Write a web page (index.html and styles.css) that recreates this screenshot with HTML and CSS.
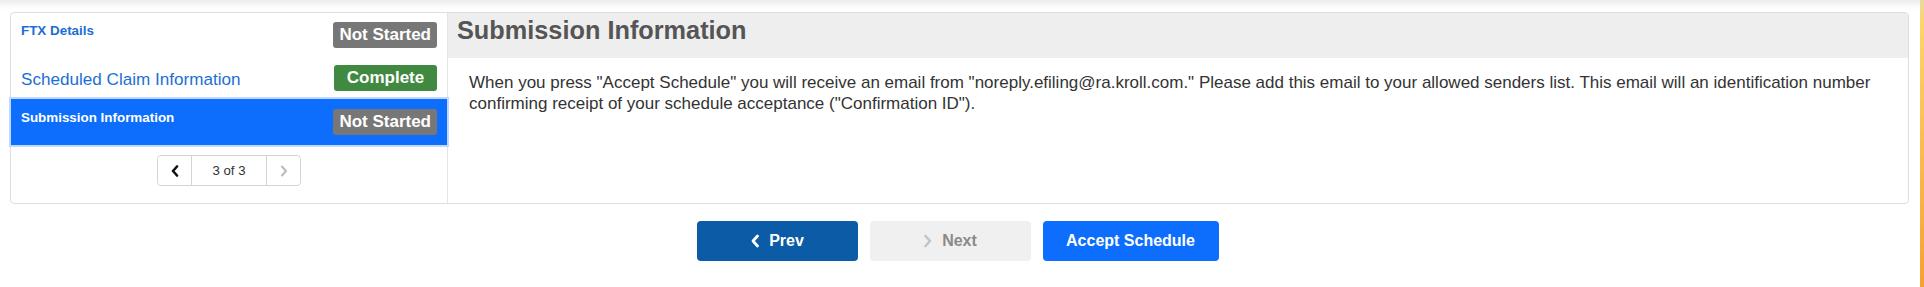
FILE: index.html
```html
<!DOCTYPE html>
<html lang="en">
<head>
    <meta charset="UTF-8">
    <meta name="viewport" content="width=device-width, initial-scale=1.0">
    <title>Schedule Review</title>
    <link rel="stylesheet" href="styles.css">
</head>
<body>
    <div class="page">
        <div class="card">
            <div class="steps">
                <div class="step">
                    <span class="step-title">FTX Details</span>
                    <span class="badge badge-muted">Not Started</span>
                </div>
                <div class="step">
                    <span class="step-title step-title-lg">Scheduled Claim Information</span>
                    <span class="badge badge-done">Complete</span>
                </div>
                <div class="step active">
                    <span class="step-title">Submission Information</span>
                    <span class="badge badge-muted">Not Started</span>
                </div>

                <div class="pager">
                    <button class="pager-btn">
                        <svg width="8" height="12" viewBox="0 0 8 12"><polyline points="6,1.5 2,6 6,10.5" fill="none" stroke="#111" stroke-width="2.6" stroke-linecap="round" stroke-linejoin="round"/></svg>
                    </button>
                    <span class="pager-count">3 of 3</span>
                    <button class="pager-btn" disabled>
                        <svg width="8" height="12" viewBox="0 0 8 12"><polyline points="2,1.5 6,6 2,10.5" fill="none" stroke="#bbb" stroke-width="2" stroke-linecap="round" stroke-linejoin="round"/></svg>
                    </button>
                </div>
            </div>

            <div class="panel">
                <h2 class="panel-head">Submission Information</h2>
                <div class="panel-body">
                    <p>When you press "Accept Schedule" you will receive an email from "noreply.efiling@ra.kroll.com." Please add this email to your allowed senders list. This email will an identification number confirming receipt of your schedule acceptance ("Confirmation ID").</p>
                </div>
            </div>
        </div>

        <div class="actions">
            <button class="btn btn-prev">
                <svg width="10" height="14" viewBox="0 0 10 14"><polyline points="7.5,2 3,7 7.5,12" fill="none" stroke="#fff" stroke-width="2.8" stroke-linecap="round" stroke-linejoin="round"/></svg>
                Prev
            </button>
            <button class="btn btn-next" disabled>
                <svg width="10" height="14" viewBox="0 0 10 14"><polyline points="2.5,2 7,7 2.5,12" fill="none" stroke="#c4c4c4" stroke-width="2.6" stroke-linecap="round" stroke-linejoin="round"/></svg>
                Next
            </button>
            <button class="btn btn-accept">Accept Schedule</button>
        </div>
    </div>
    <div class="edge"></div>
</body>
</html>
```

FILE: styles.css
```css
* {
    margin: 0;
    padding: 0;
    box-sizing: border-box;
}

body {
    display: flex;
    min-height: 100vh;
    background: linear-gradient(180deg, #ececec 0px, #fafafa 6px, #fff 10px);
    font-family: "Liberation Sans", Arial, sans-serif;
    color: #333;
}

.page {
    flex: 1;
}

.edge {
    width: 4px;
    background: linear-gradient(180deg, #e9d9a0 0%, #fcd56a 8%, #fbbf55 45%, #f5a133 100%);
}

.card {
    display: flex;
    margin: 12px 11px 0 10px;
    height: 192px;
    border: 1px solid #dedede;
    border-radius: 4px;
    background: #fff;
}

.steps {
    width: 437px;
    flex-shrink: 0;
    border-right: 1px solid #e3e3e3;
    display: flex;
    flex-direction: column;
}

.step {
    display: flex;
    justify-content: space-between;
    align-items: flex-start;
    height: 43px;
    padding: 9px 10px 0 10px;
}

.step.active {
    height: 46px;
    padding-top: 10px;
    background: #0d6efd;
    box-shadow: 0 0 0 2px #bfd9fc;
    position: relative;
}

.step-title {
    margin-top: 1px;
    font-size: 13.4px;
    line-height: 16px;
    font-weight: bold;
    color: #1a6fd6;
}

.step-title-lg {
    margin-top: 5px;
    font-size: 17.1px;
    line-height: 20px;
    font-weight: normal;
}

.step.active .step-title {
    color: #fff;
}

.badge {
    height: 26px;
    padding: 0 6px;
    border-radius: 3px;
    font-size: 17px;
    line-height: 26px;
    font-weight: bold;
    color: #fff;
}

.badge-muted {
    background: #777;
    min-width: 103px;
}

.badge-done {
    background: #3f8a40;
    min-width: 103px;
    text-align: center;
}

.pager {
    align-self: center;
    display: flex;
    margin-top: 10px;
    height: 31px;
    border: 1px solid #d4d4d4;
    border-radius: 4px;
}

.pager-btn {
    width: 33px;
    border: none;
    background: #fff;
    display: flex;
    align-items: center;
    justify-content: center;
    border-radius: 4px;
}

.pager-count {
    width: 76px;
    border-left: 1px solid #d4d4d4;
    border-right: 1px solid #d4d4d4;
    text-align: center;
    font-size: 13.2px;
    line-height: 29px;
    color: #333;
}

.panel {
    flex: 1;
    display: flex;
    flex-direction: column;
}

.panel-head {
    height: 45px;
    padding: 2px 9px 0;
    background: #eee;
    font-size: 25.3px;
    line-height: 30px;
    font-weight: bold;
    color: #555;
}

.panel-body {
    padding: 14px 21px 0 21px;
    font-size: 17px;
    line-height: 21px;
    color: #333;
}

.actions {
    display: flex;
    justify-content: center;
    gap: 12px;
    margin-top: 17px;
    padding-right: 5px;
}

.btn {
    display: flex;
    align-items: center;
    justify-content: center;
    gap: 9px;
    width: 161px;
    height: 40px;
    border: none;
    border-radius: 4px;
    font-family: "Liberation Sans", Arial, sans-serif;
    font-size: 16px;
    font-weight: bold;
    color: #fff;
}

.btn-prev {
    background: #0b5ba6;
}

.btn-next {
    background: #f0f0f0;
    color: #8a8a8a;
}

.btn-accept {
    width: 176px;
    background: #0d6efd;
}
```
